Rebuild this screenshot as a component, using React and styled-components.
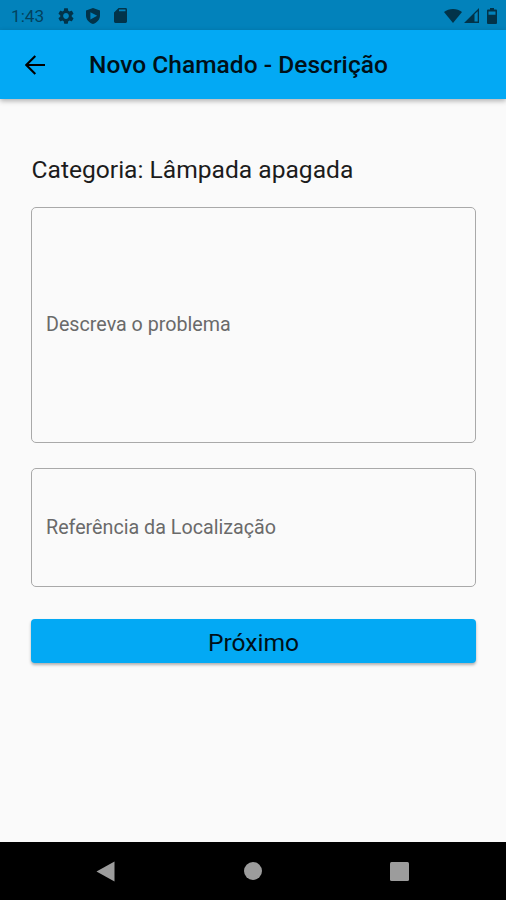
import React, { Component } from 'react'
import styled, { createGlobalStyle } from 'styled-components'

const GlobalStyle = createGlobalStyle`
  * {
    box-sizing: border-box;
  }

  body {
    margin: 0;
    font-family: Roboto, sans-serif;
    background: #fafafa;
  }
`

const Screen = styled.div`
  display: flex;
  flex-direction: column;
  width: 506px;
  height: 900px;
  overflow: hidden;
  background: #fafafa;
`

const StatusBar = styled.header`
  display: flex;
  align-items: center;
  justify-content: space-between;
  flex: none;
  height: 30px;
  padding: 1px 9px 0 11px;
  background: #0282bb;
  color: #023349;
`

const StatusGroup = styled.div`
  display: flex;
  align-items: center;
`

const Clock = styled.span`
  width: 47px;
  font-size: 17.2px;
  line-height: 20px;
  color: #02425f;
`

const Glyph = styled.svg`
  display: block;
  flex: none;
  width: ${props => props.$width}px;
  height: ${props => props.$height}px;
  margin-left: ${props => props.$gap || 0}px;
  fill: currentColor;
`

const AppBar = styled.div`
  display: flex;
  align-items: center;
  flex: none;
  height: 69px;
  padding-left: 25px;
  background: #03a9f4;
  box-shadow: 0 2px 5px rgba(0, 0, 0, 0.3);
`

const BackButton = styled.button`
  display: flex;
  width: 64px;
  padding: 0;
  border: none;
  background: none;
  color: #000;
`

const Title = styled.h1`
  margin: 0;
  padding-top: 1px;
  font-size: 24.5px;
  line-height: 30px;
  font-weight: 500;
  letter-spacing: 0.04px;
  white-space: nowrap;
  color: #001018;
`

const Content = styled.main`
  display: flex;
  flex-direction: column;
  flex: 1;
  padding: 56px 30px 0 31px;
`

const Category = styled.p`
  margin: 0 0 22px;
  padding-left: 0.5px;
  font-size: 24.6px;
  line-height: 30px;
  white-space: nowrap;
  color: #1c1c1c;
`

const Field = styled.div`
  display: flex;
  align-items: center;
  height: ${props => props.$height}px;
  margin-bottom: ${props => props.$gap}px;
  padding: 0 14px;
  border: 1px solid #a9a9a9;
  border-radius: 5px;
`

const FieldLabel = styled.label`
  font-size: 19.7px;
  line-height: 24px;
  white-space: nowrap;
  color: #6a6a6a;
`

const SubmitButton = styled.button`
  height: 44px;
  padding: 4px 0 0;
  border: none;
  border-radius: 4px;
  background: #03a9f4;
  box-shadow: 0 2px 3px rgba(0, 0, 0, 0.3);
  font-family: inherit;
  font-size: 24.6px;
  line-height: 30px;
  color: #001018;
`

const NavBar = styled.nav`
  display: flex;
  align-items: center;
  justify-content: space-between;
  flex: none;
  height: 58px;
  padding: 0 97px 0 96px;
  background: #000;
  color: #9c9c9c;
`

export default class App extends Component {
  render() {
    return (
      <Screen>
        <GlobalStyle />
        <StatusBar>
          <StatusGroup>
            <Clock>1:43</Clock>
            <Glyph $width={16} $height={16} viewBox="2 2 20 20">
              <path d="M19.14 12.94c.04-.3.06-.61.06-.94 0-.32-.02-.64-.07-.94l2.03-1.58c.18-.14.23-.41.12-.61l-1.92-3.32c-.12-.22-.37-.29-.59-.22l-2.39.96c-.5-.38-1.03-.7-1.62-.94l-.36-2.54c-.04-.24-.24-.41-.48-.41h-3.84c-.24 0-.43.17-.47.41l-.36 2.54c-.59.24-1.13.57-1.62.94l-2.39-.96c-.22-.08-.47 0-.59.22L2.74 8.87c-.12.21-.08.47.12.61l2.03 1.58c-.05.3-.09.63-.09.94s.02.64.07.94l-2.03 1.58c-.18.14-.23.41-.12.61l1.92 3.32c.12.22.37.29.59.22l2.39-.96c.5.38 1.03.7 1.62.94l.36 2.54c.05.24.24.41.48.41h3.84c.24 0 .44-.17.47-.41l.36-2.54c.59-.24 1.13-.56 1.62-.94l2.39.96c.22.08.47 0 .59-.22l1.92-3.32c.12-.22.07-.47-.12-.61l-2.01-1.58zM12 15.6c-1.98 0-3.6-1.62-3.6-3.6s1.62-3.6 3.6-3.6 3.6 1.62 3.6 3.6-1.62 3.6-3.6 3.6z" />
            </Glyph>
            <Glyph $width={14} $height={16} $gap={12} viewBox="0 0 14 16">
              <path
                fillRule="evenodd"
                d="M7 0l7 2.6v5C14 11.6 11 15 7 16 3 15 0 11.6 0 7.6v-5zM4.4 4.2l6.8 3.6-6.8 3.8z"
              />
            </Glyph>
            <Glyph $width={13} $height={15} $gap={14} viewBox="0 0 13 15">
              <path
                fillRule="evenodd"
                d="M4.6 0h7A1.4 1.4 0 0 1 13 1.4v12.2a1.4 1.4 0 0 1-1.4 1.4H1.4A1.4 1.4 0 0 1 0 13.6V4.6zM5 1.6v1.7h6.5V1.6z"
              />
            </Glyph>
          </StatusGroup>
          <StatusGroup>
            <Glyph $width={18} $height={14} viewBox="0 0 18 14">
              <path d="M9 14L0 3C2.5 1 5.6 0 9 0s6.5 1 9 3z" />
            </Glyph>
            <Glyph $width={15} $height={15} $gap={2} viewBox="0 0 15 15">
              <path fillRule="evenodd" d="M15 0v15H0zM10.5 6.3v7.3h3.2V3.2z" />
            </Glyph>
            <Glyph $width={10} $height={16} $gap={8} viewBox="0 0 10 16">
              <path
                fillRule="evenodd"
                d="M3 0h4v1.6h2a1 1 0 0 1 1 1V15a1 1 0 0 1-1 1H1a1 1 0 0 1-1-1V2.6a1 1 0 0 1 1-1h2zM1.5 3.5v3.2h7V3.5z"
              />
            </Glyph>
          </StatusGroup>
        </StatusBar>

        <AppBar>
          <BackButton aria-label="Voltar">
            <Glyph $width={20} $height={20} viewBox="0 0 20 20">
              <path
                d="M10.3 1L1.3 10l9 9M1.3 10H20"
                fill="none"
                stroke="currentColor"
                strokeWidth="2.1"
              />
            </Glyph>
          </BackButton>
          <Title>Novo Chamado - Descrição</Title>
        </AppBar>

        <Content>
          <Category>Categoria: Lâmpada apagada</Category>
          <Field $height={236} $gap={25}>
            <FieldLabel>Descreva o problema</FieldLabel>
          </Field>
          <Field $height={119} $gap={32}>
            <FieldLabel>Referência da Localização</FieldLabel>
          </Field>
          <SubmitButton>Próximo</SubmitButton>
        </Content>

        <NavBar>
          <Glyph $width={19} $height={21} viewBox="0 0 19 21">
            <path d="M18.5 0.5v20L0.5 10.5z" />
          </Glyph>
          <Glyph $width={18} $height={18} viewBox="0 0 18 18">
            <circle cx="9" cy="9" r="9" />
          </Glyph>
          <Glyph $width={19} $height={19} viewBox="0 0 19 19">
            <rect width="19" height="19" rx="1.5" />
          </Glyph>
        </NavBar>
      </Screen>
    )
  }
}
